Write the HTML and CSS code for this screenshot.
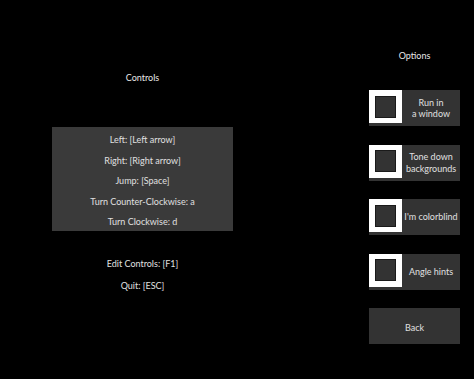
FILE: index.html
```html
<!DOCTYPE html>
<html lang="en">
<head>
  <meta charset="UTF-8" />
  <title>Options</title>
  <link rel="stylesheet" href="styles.css">
</head>
<body>

<div class="menu">
  <div class="controls">
    <div class="titulo">Controls</div>
    <div class="panel">
      <div class="fila">Left: [Left arrow]</div>
      <div class="fila">Right: [Right arrow]</div>
      <div class="fila">Jump: [Space]</div>
      <div class="fila">Turn Counter-Clockwise: a</div>
      <div class="fila">Turn Clockwise: d</div>
    </div>
    <div class="extra">
      <div class="fila">Edit Controls: [F1]</div>
      <div class="fila">Quit: [ESC]</div>
    </div>
  </div>

  <div class="options">
    <div class="titulo">Options</div>
    <div class="opcion"><span class="check"><span></span></span><span class="texto">Run in<br>a window</span></div>
    <div class="opcion"><span class="check"><span></span></span><span class="texto">Tone down<br>backgrounds</span></div>
    <div class="opcion"><span class="check"><span></span></span><span class="texto">I'm colorblind</span></div>
    <div class="opcion"><span class="check"><span></span></span><span class="texto">Angle hints</span></div>
    <div class="opcion back"><span class="texto">Back</span></div>
  </div>
</div>

</body>
</html>
```

FILE: styles.css
```css
:root {
  --texto: #e0e0e0;
  --panel: #3a3a3a;
  --boton: #333333;
}

body {
  background-color: #000;
  color: var(--texto);
  font-family: 'Lato', sans-serif;
  font-size: 9px;
  margin: 0;
  padding: 0;
}

.menu {
  display: flex;
  align-items: flex-start;
}

.controls {
  width: 181px;
  margin-left: 52px;
  padding-top: 72px;
  text-align: center;
}

.titulo {
  line-height: 12px;
  color: #e8e8e8;
}

.panel {
  background-color: var(--panel);
  margin-top: 43px;
  padding-top: 3px;
  height: 101px;
}

.fila {
  line-height: 20.5px;
}

.extra {
  margin-top: 22px;
}

.extra .fila {
  line-height: 21.7px;
}

.options {
  width: 91px;
  margin-left: 136px;
  padding-top: 50px;
  display: flex;
  flex-direction: column;
  gap: 18.5px;
}

.options .titulo {
  text-align: center;
  margin-bottom: 9.5px;
}

.opcion {
  height: 36px;
  background-color: var(--boton);
  display: flex;
}

.check {
  width: 33px;
  height: 33px;
  background-color: #fff;
  display: flex;
  align-items: center;
  justify-content: center;
}

.check span {
  width: 19px;
  height: 20px;
  background-color: var(--boton);
  border: 1px solid #1a1a1a;
}

.texto {
  flex: 1;
  display: flex;
  align-items: center;
  justify-content: center;
  text-align: center;
  line-height: 11.4px;
}

.back .texto {
  padding-top: 4px;
}
```
